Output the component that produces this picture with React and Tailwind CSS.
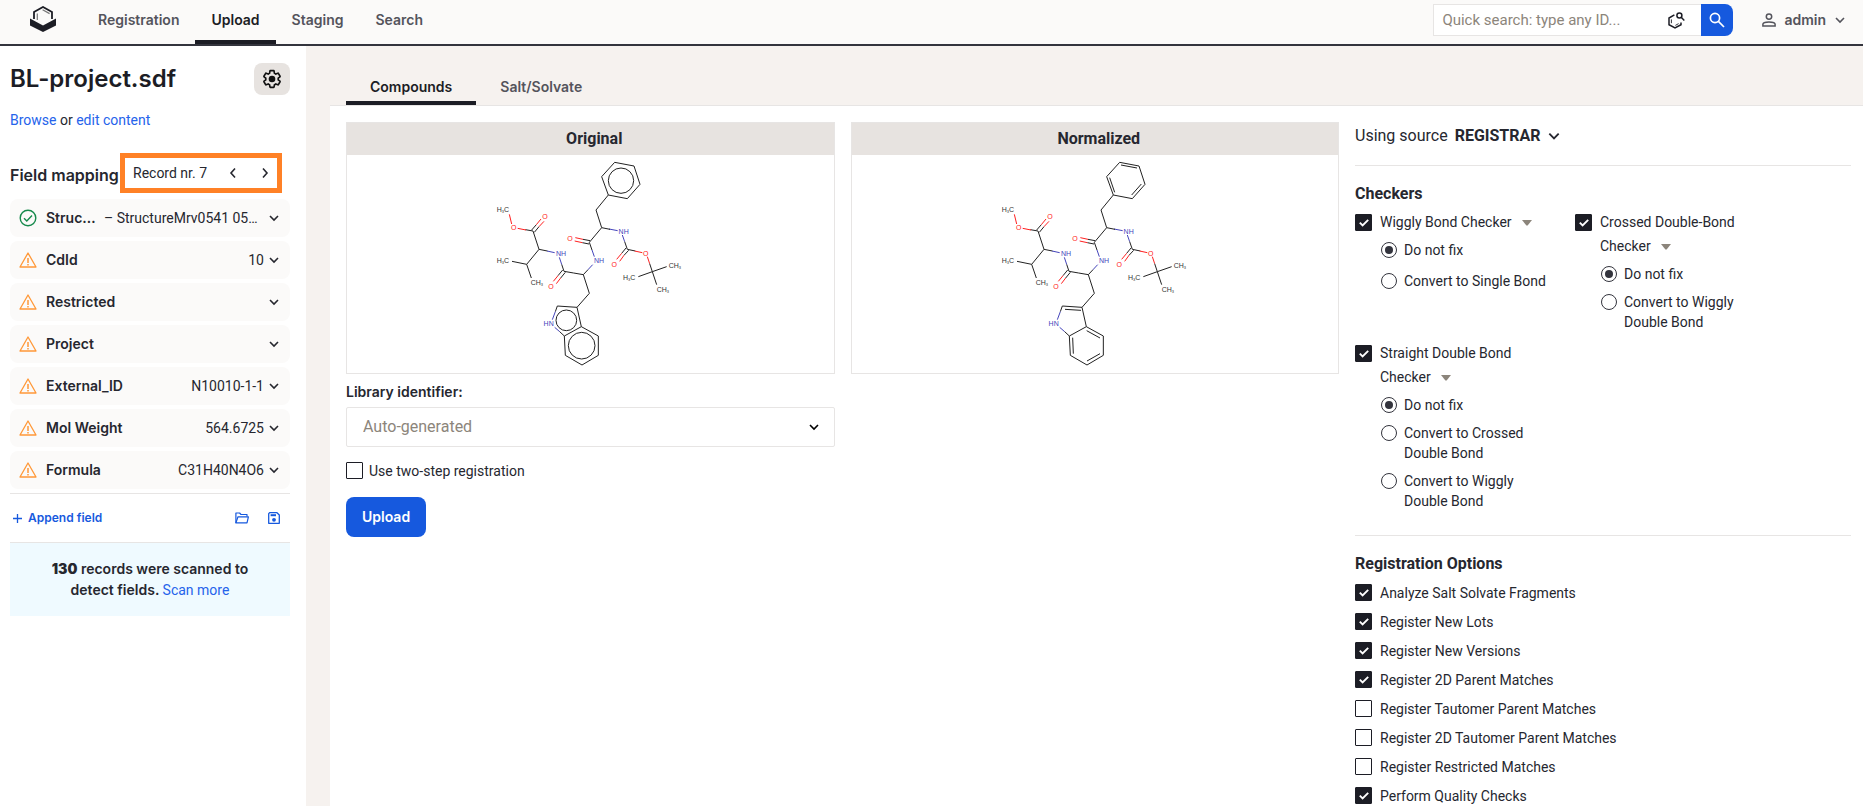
import { useState } from "react";

const INK = "#1c1d25";

function Chevron({ className = "", dir = "down" }) {
  const d = {
    down: "M2 4 L6 8 L10 4",
    left: "M8 1.5 L4 6 L8 10.5",
    right: "M4 1.5 L8 6 L4 10.5",
  }[dir];
  return (
    <svg viewBox="0 0 12 12" className={className} fill="none" stroke="currentColor" strokeWidth="1.6" aria-hidden="true">
      <path d={d} />
    </svg>
  );
}

function Logo() {
  return (
    <svg viewBox="0 0 26 26" className="h-[26px] w-[26px]" aria-hidden="true">
      <path d="M4 13 V6 L13 1 L22 6 V13" fill="none" stroke={INK} strokeWidth="1.8" />
      <path d="M7.3 14 V7.5" stroke="#777" strokeWidth="1.2" />
      <path d="M12.6 3.8 L19.6 7.6" stroke="#777" strokeWidth="1.2" />
      <path d="M0 12.5 L13 19.5 L26 12.5 V19.5 L13 26 L0 19.5 Z" fill={INK} />
    </svg>
  );
}

function GearIcon() {
  return (
    <svg viewBox="0 0 24 24" className="h-5 w-5" aria-hidden="true">
      <path
        d="M19.43 12.98c.04-.32.07-.64.07-.98s-.03-.66-.07-.98l2.11-1.65c.19-.15.24-.42.12-.64l-2-3.46c-.12-.22-.39-.3-.61-.22l-2.49 1c-.52-.4-1.08-.73-1.69-.98l-.38-2.65C14.46 2.18 14.25 2 14 2h-4c-.25 0-.46.18-.49.42l-.38 2.65c-.61.25-1.17.59-1.69.98l-2.49-1c-.23-.09-.49 0-.61.22l-2 3.46c-.13.22-.07.49.12.64l2.11 1.65c-.04.32-.07.65-.07.98s.03.66.07.98l-2.11 1.65c-.19.15-.24.42-.12.64l2 3.46c.12.22.39.3.61.22l2.49-1c.52.4 1.08.73 1.69.98l.38 2.65c.03.24.24.42.49.42h4c.25 0 .46-.18.49-.42l.38-2.65c.61-.25 1.17-.59 1.69-.98l2.49 1c.23.09.49 0 .61-.22l2-3.46c.12-.22.07-.49-.12-.64l-2.11-1.65z"
        fill="none"
        stroke="#111"
        strokeWidth="2"
        strokeLinejoin="round"
      />
      <circle cx="12" cy="12" r="4" fill="#111" />
    </svg>
  );
}

function WarningIcon() {
  return (
    <svg viewBox="0 0 18 18" className="h-[18px] w-[18px] shrink-0" fill="none" stroke="#ff9838" aria-hidden="true">
      <path d="M9 2 L17 16 H1 Z" strokeWidth="1.3" strokeLinejoin="round" />
      <path d="M9 7 V12 M9 13 V14.4" strokeWidth="1.5" />
    </svg>
  );
}

function CheckCircleIcon() {
  return (
    <svg viewBox="0 0 18 18" className="h-[18px] w-[18px] shrink-0" fill="none" stroke="#168a4c" strokeWidth="1.4" aria-hidden="true">
      <circle cx="9" cy="9" r="7.8" />
      <path d="M5 9.3 L7.8 12 L13 6.6" />
    </svg>
  );
}

function FolderIcon() {
  return (
    <svg viewBox="0 0 14 12" className="h-3 w-[14px]" fill="none" stroke="currentColor" strokeWidth="1.2" strokeLinejoin="round" aria-hidden="true">
      <path d="M0.9 10.9 V1 H4.6 L6 2.5 H12 V4.6" />
      <path d="M0.9 10.9 L3 4.8 H13.4 L12 10.9 Z" />
    </svg>
  );
}

function SaveIcon() {
  return (
    <svg viewBox="0 0 12 12" className="h-3 w-3" fill="none" stroke="currentColor" strokeWidth="1.3" aria-hidden="true">
      <path d="M1.6 0.7 H9 L11.3 3 V11.3 H0.7 V1.6 Z" strokeLinejoin="round" />
      <path d="M2.6 3.2 H8" strokeWidth="2" />
      <circle cx="6" cy="7.8" r="1.9" fill="currentColor" stroke="none" />
    </svg>
  );
}

function StructureSearchIcon() {
  return (
    <svg viewBox="0 0 17 17" className="h-[17px] w-[17px]" fill="none" stroke={INK} strokeWidth="1.5" aria-hidden="true">
      <path d="M6.4 2.9 L1 6 V12.7 L7 16 L13 12.7 V10.6" />
      <path d="M3.4 7.4 V11.2 M7.4 13.4 L10.6 11.6" strokeWidth="0.9" />
      <circle cx="11.4" cy="3.4" r="2.5" />
      <path d="M13.2 5.3 L16.3 8.6" />
    </svg>
  );
}

function SearchIcon() {
  return (
    <svg viewBox="0 0 16 16" className="h-4 w-4" fill="none" stroke="#fff" strokeWidth="1.7" aria-hidden="true">
      <circle cx="6" cy="6" r="4.6" />
      <path d="M9.4 9.4 L15 15" />
    </svg>
  );
}

function UserIcon() {
  return (
    <svg viewBox="0 0 14 14" className="h-[14px] w-[14px]" fill="none" stroke="#54545c" strokeWidth="1.5" aria-hidden="true">
      <circle cx="7" cy="3.6" r="2.7" />
      <path d="M0.9 13.1 V11.3 C0.9 9.8 4 8.9 7 8.9 S13.1 9.8 13.1 11.3 V13.1 Z" />
    </svg>
  );
}

const BONDS = [
  ["k", "385,135 348,180 365,233 328,277"],
  ["k", "365,80 404,37 462,48 480,103 442,146 385,135 365,80"],
  ["n", "387,237 413,242"],
  ["k", "365,233 390,238"],
  ["n", "427,255 434,275"],
  ["k", "434,275 442,298 466,303"],
  ["r", "464,303 487,308"],
  ["r", "502,320 509,341"],
  ["k", "509,341 517,365"],
  ["k", "475,380 517,365 560,350"],
  ["k", "517,365 530,404"],
  ["k", "328,277 336,300"],
  ["n", "336,300 343,320"],
  ["n", "338,344 324,359"],
  ["k", "324,359 310,374 281,369 252,364"],
  ["k", "310,374 328,430 291,472"],
  ["k", "252,364 245,343"],
  ["n", "245,343 238,322"],
  ["n", "224,308 201,303"],
  ["k", "202,303 177,298 140,343 96,334"],
  ["k", "140,343 154,384"],
  ["k", "177,298 159,243 136,239"],
  ["r", "138,240 113,235"],
  ["r", "95,222 88,193"],
  ["k", "291,472 304,530 253,558"],
  ["k", "291,472 232,468 226,485"],
  ["n", "226,485 217,509"],
  ["n", "224,532 239,545"],
  ["k", "239,545 253,558 256,616 306,645 355,616 355,558 304,530"],
];

const DOUBLE_BONDS = [
  ["k", "155,240 169,224"],
  ["k", "163,247 177,230"],
  ["r", "169,224 183,207"],
  ["r", "177,230 192,214"],
  ["k", "330,272 309,268"],
  ["k", "327,282 307,278"],
  ["r", "309,268 286,263"],
  ["r", "307,278 284,273"],
  ["k", "438,294 425,310"],
  ["k", "446,301 432,316"],
  ["r", "425,310 410,328"],
  ["r", "432,316 419,334"],
  ["k", "248,360 234,377"],
  ["k", "256,367 242,384"],
  ["r", "234,377 220,394"],
  ["r", "242,384 229,401"],
];

const KEKULE_BONDS = ["408,45 456,54", "469,102 440,135", "374,83 389,127", "240,478 288,481", "305,542 345,564", "345,611 306,633", "265,611 263,563"];

const ATOMS = [
  ["r", 195, 207, "O"],
  ["r", 101, 241, "O"],
  ["r", 270, 273, "O"],
  ["r", 403, 351, "O"],
  ["r", 497, 318, "O"],
  ["r", 213, 417, "O"],
  ["n", 431, 251, "NH"],
  ["n", 243, 318, "NH"],
  ["n", 357, 338, "NH"],
  ["n", 206, 528, "HN"],
];

const METHYLS = [
  [50, 186, "H3C"],
  [50, 339, "H3C"],
  [429, 390, "H3C"],
  [152, 405, "CH3"],
  [566, 354, "CH3"],
  [530, 426, "CH3"],
];

const COLORS = { k: "#222222", r: "#ff2020", n: "#4444bb" };

function Molecule({ aromatic, label }) {
  return (
    <svg viewBox="0 15 660 654" className="mx-auto block h-[218px] w-[220px]" role="img" aria-label={label}>
      <g fill="none" strokeWidth="3">
        {[...BONDS, ...DOUBLE_BONDS].map(([c, points]) => (
          <polyline key={points} points={points} stroke={COLORS[c]} />
        ))}
        {aromatic ? (
          <g stroke={COLORS.k}>
            <circle cx="423" cy="92" r="38" />
            <circle cx="259" cy="511" r="31" />
            <circle cx="305" cy="587" r="40" />
          </g>
        ) : (
          KEKULE_BONDS.map((points) => <polyline key={points} points={points} stroke={COLORS.k} />)
        )}
      </g>
      <g fontFamily="Liberation Sans, sans-serif" fontSize="21">
        {ATOMS.map(([c, x, y, text]) => (
          <text key={`${x}-${y}`} x={x} y={y} textAnchor="middle" fill={COLORS[c]}>
            {text}
          </text>
        ))}
        {METHYLS.map(([x, y, text]) => (
          <text key={`${x}-${y}`} x={x} y={y} fill="#333">
            {text === "H3C" ? "H" : "CH"}
            <tspan fontSize="12" dy="4">3</tspan>
            {text === "H3C" && <tspan dy="-4">C</tspan>}
          </text>
        ))}
      </g>
    </svg>
  );
}

function Checkbox({ checked, children, id }) {
  return (
    <div className="flex items-start gap-2">
      <span className="relative mt-px grid h-[17px] w-[17px] shrink-0 place-items-center">
        <input
          id={id}
          type="checkbox"
          defaultChecked={checked}
          className="peer h-[17px] w-[17px] appearance-none rounded-[1px] border border-[#1c1d25] bg-white checked:bg-[#1c1d25]"
        />
        <svg viewBox="0 0 10 8" className="pointer-events-none absolute hidden h-2 w-[10px] peer-checked:block" fill="none" stroke="#fff" strokeWidth="1.9" aria-hidden="true">
          <path d="M0.8 3.6 L3.6 6.4 L9.2 0.9" />
        </svg>
      </span>
      {children}
    </div>
  );
}

function Checker({ id, title, options, gap = "gap-2" }) {
  return (
    <fieldset className="min-w-0">
      <Checkbox id={id} checked>
        <div className="text-sm leading-6">
          <label htmlFor={id} className="-mt-[3px] block">
            {title}
            <button type="button" aria-label={`${title} details`} className="ml-[10px] align-middle">
              <svg viewBox="0 0 10 6" className="h-[6px] w-[10px]" aria-hidden="true">
                <path d="M0 0 H10 L5.6 5.4 H4.4 Z" fill="#8c857b" />
              </svg>
            </button>
          </label>
        </div>
      </Checkbox>
      <div className={`ml-[26px] mt-[6px] flex flex-col ${gap}`}>
        {options.map((option, i) => (
          <label key={option} className="flex items-start gap-[7px] text-sm leading-5">
            <input
              type="radio"
              name={id}
              defaultChecked={i === 0}
              className="mt-[2px] grid h-4 w-4 shrink-0 appearance-none place-items-center rounded-full border border-[#33343d] before:h-2 before:w-2 before:rounded-full checked:before:bg-[#33343d]"
            />
            {option}
          </label>
        ))}
      </div>
    </fieldset>
  );
}

const NAV = ["Registration", "Upload", "Staging", "Search"];

const FIELDS = [
  ["CdId", "10"],
  ["Restricted", ""],
  ["Project", ""],
  ["External_ID", "N10010-1-1"],
  ["Mol Weight", "564.6725"],
  ["Formula", "C31H40N4O6"],
];

const OPTIONS = [
  ["Analyze Salt Solvate Fragments", true],
  ["Register New Lots", true],
  ["Register New Versions", true],
  ["Register 2D Parent Matches", true],
  ["Register Tautomer Parent Matches", false],
  ["Register 2D Tautomer Parent Matches", false],
  ["Register Restricted Matches", false],
  ["Perform Quality Checks", true],
];

function FieldRow({ ok, name, value }) {
  return (
    <li>
      <button type="button" className="flex h-[38px] w-full items-center rounded-lg bg-[#fbfaf9] pl-[9px] pr-[10px] text-left">
        {ok ? <CheckCircleIcon /> : <WarningIcon />}
        <span className={`ml-[9px] font-[Inter,sans-serif] text-sm font-semibold ${ok ? "w-[50px] shrink-0 truncate" : ""}`}>{name}</span>
        <span className="ml-auto truncate pl-2 text-sm">{value}</span>
        <Chevron className="ml-1 h-3 w-3 shrink-0" />
      </button>
    </li>
  );
}

function Panel({ title, aromatic }) {
  return (
    <section className="border border-[#e7e5e4]">
      <h2 className="bg-[#e7e3e0] pl-2 text-center text-base font-bold leading-8">{title}</h2>
      <Molecule aromatic={aromatic} label={`${title} structure`} />
    </section>
  );
}

export default function App() {
  const [tab, setTab] = useState("Upload");
  return (
    <div className="flex h-screen flex-col overflow-hidden bg-[#f6f2ef] font-[Roboto,sans-serif] text-[#26272f]">
      <header className="flex h-[46px] shrink-0 items-center border-b-2 border-[#33343d] bg-[#fbfaf9] pl-[30px] pr-[17px]">
        <a href="#home" aria-label="Home" className="mr-[26px] -mt-[6px]">
          <Logo />
        </a>
        <nav className="flex h-full font-[Inter,sans-serif] text-sm font-semibold">
          {NAV.map((item) => (
            <a
              key={item}
              href={`#${item.toLowerCase()}`}
              onClick={() => setTab(item)}
              className={`flex items-center border-b-4 px-4 ${tab === item ? "border-[#1c1d25] text-[#1c1d25]" : "border-transparent text-[#54545c]"}`}
            >
              {item}
            </a>
          ))}
        </nav>
        <div className="-mt-1 ml-auto flex h-8">
          <div className="flex w-[268px] items-center border border-r-0 border-[#e7e5e4] bg-white pl-2 pr-4">
            <input
              type="text"
              aria-label="Quick search"
              placeholder="Quick search: type any ID..."
              className="min-w-0 flex-1 text-[15px] outline-none placeholder:text-[#8c857b]"
            />
            <button type="button" aria-label="Structure search">
              <StructureSearchIcon />
            </button>
          </div>
          <button type="button" aria-label="Search" className="grid w-8 place-items-center rounded-r-lg bg-[#1659de]">
            <SearchIcon />
          </button>
        </div>
        <button type="button" className="-mt-1 ml-[29px] flex items-center gap-2 font-[Inter,sans-serif] text-sm font-semibold text-[#54545c]">
          <UserIcon />
          admin
          <Chevron className="h-3 w-3" />
        </button>
      </header>

      <div className="flex min-h-0 flex-1">
        <aside className="w-[306px] shrink-0 bg-white pl-[10px] pr-4 pt-[17px]">
          <div className="flex items-center justify-between">
            <h1 className="font-[Inter,sans-serif] text-2xl font-semibold leading-8 text-[#1c1d25]">BL-project.sdf</h1>
            <button type="button" aria-label="Settings" className="grid h-8 w-9 place-items-center rounded-lg bg-[#e7e3e0]">
              <GearIcon />
            </button>
          </div>
          <p className="mt-[15px] text-sm leading-5">
            <a href="#browse" className="text-[#2563eb]">Browse</a> or{" "}
            <a href="#edit" className="text-[#2563eb]">edit content</a>
          </p>
          <div className="mt-[23px] flex items-center">
            <h2 className="w-[110px] whitespace-nowrap pt-1 font-[Inter,sans-serif] text-base font-semibold">Field mapping</h2>
            <div className="flex h-10 w-[162px] items-center border-[5px] border-[#ff8126] pl-2 pr-[6px] text-sm">
              Record nr. 7
              <button type="button" aria-label="Previous record" className="ml-auto">
                <Chevron dir="left" className="h-3 w-3" />
              </button>
              <button type="button" aria-label="Next record" className="ml-5">
                <Chevron dir="right" className="h-3 w-3" />
              </button>
            </div>
          </div>
          <ul className="mt-[6px] flex flex-col gap-1">
            <FieldRow ok name="Structure" value="– StructureMrv0541 05162013" />
            {FIELDS.map(([name, value]) => (
              <FieldRow key={name} name={name} value={value} />
            ))}
          </ul>
          <div className="mt-1 flex h-[50px] items-center border-y border-[#e7e5e4] pl-[3px] pr-[10px] text-[#1659de]">
            <button type="button" className="flex items-center gap-[6px] font-[Inter,sans-serif] text-xs font-semibold">
              <svg viewBox="0 0 9 9" className="h-[9px] w-[9px]" stroke="currentColor" strokeWidth="1.3" aria-hidden="true">
                <path d="M4.5 0 V9 M0 4.5 H9" />
              </svg>
              Append field
            </button>
            <button type="button" aria-label="Open mapping" className="ml-auto">
              <FolderIcon />
            </button>
            <button type="button" aria-label="Save mapping" className="ml-[19px]">
              <SaveIcon />
            </button>
          </div>
          <p className="bg-[#effaff] px-8 py-[15px] text-center font-[Inter,sans-serif] text-sm font-semibold leading-[21px]">
            <b>130</b> records were scanned to detect fields.{" "}
            <a href="#scan" className="font-[Roboto,sans-serif] font-normal text-[#2563eb]">Scan more</a>
          </p>
        </aside>

        <main className="ml-6 flex min-w-0 flex-1 flex-col pt-[23px]">
          <div role="tablist" className="flex h-9 shrink-0 pl-4 font-[Inter,sans-serif] text-sm font-semibold">
            <button type="button" role="tab" aria-selected="true" className="border-b-4 border-[#1c1d25] px-6 pt-1 text-[#1c1d25]">
              Compounds
            </button>
            <button type="button" role="tab" aria-selected="false" className="border-b-4 border-transparent px-6 pt-1 text-[#54545c]">
              Salt/Solvate
            </button>
          </div>
          <div className="flex flex-1 items-start gap-4 border-t border-[#e7e5e4] bg-white pb-4 pl-4 pr-3 pt-4">
            <div className="grid flex-1 grid-cols-2 gap-4">
              <Panel title="Original" aromatic />
              <Panel title="Normalized" />
              <form className="-mt-2 flex flex-col items-start" onSubmit={(e) => e.preventDefault()}>
                <label htmlFor="library" className="font-[Inter,sans-serif] text-sm font-semibold leading-5">
                  Library identifier:
                </label>
                <div className="relative mt-[5px] w-full">
                  <select id="library" className="h-10 w-full appearance-none rounded-[2px] border border-[#e7e5e4] bg-white px-4 text-base text-[#8c857b]">
                    <option>Auto-generated</option>
                  </select>
                  <Chevron className="pointer-events-none absolute right-[15px] top-[14px] h-3 w-3 text-black" />
                </div>
                <div className="mt-[14px]">
                  <Checkbox id="two-step">
                    <label htmlFor="two-step" className="-ml-[2px] text-sm">Use two-step registration</label>
                  </Checkbox>
                </div>
                <button type="submit" className="mt-4 h-10 rounded-lg bg-[#1659de] px-4 font-[Inter,sans-serif] text-sm font-semibold text-white">
                  Upload
                </button>
              </form>
            </div>

            <div className="w-[496px] shrink-0">
              <div className="flex h-[27px] items-center gap-[7px] text-base">
                Using source
                <button type="button" className="flex items-center gap-[6px] font-bold">
                  REGISTRAR
                  <Chevron className="h-[14px] w-[14px]" />
                </button>
              </div>
              <hr className="mt-4 border-[#e7e5e4]" />
              <h3 className="mt-4 text-base font-bold leading-6">Checkers</h3>
              <div className="mt-[7px] grid grid-cols-[200px_200px] gap-x-5 gap-y-3">
                <Checker id="wiggly" title="Wiggly Bond Checker" options={["Do not fix", "Convert to Single Bond"]} gap="gap-[11px]" />
                <Checker id="crossed" title="Crossed Double-Bond Checker" options={["Do not fix", "Convert to Wiggly Double Bond"]} />
                <Checker
                  id="straight"
                  title="Straight Double Bond Checker"
                  options={["Do not fix", "Convert to Crossed Double Bond", "Convert to Wiggly Double Bond"]}
                />
              </div>
              <hr className="mt-6 border-[#e7e5e4]" />
              <h3 className="mt-4 text-base font-bold leading-6">Registration Options</h3>
              <ul className="mt-[7px] flex flex-col gap-[9px]">
                {OPTIONS.map(([name, checked], i) => (
                  <li key={name}>
                    <Checkbox id={`option-${i}`} checked={checked}>
                      <label htmlFor={`option-${i}`} className="text-sm">{name}</label>
                    </Checkbox>
                  </li>
                ))}
              </ul>
            </div>
          </div>
        </main>
      </div>
    </div>
  );
}
